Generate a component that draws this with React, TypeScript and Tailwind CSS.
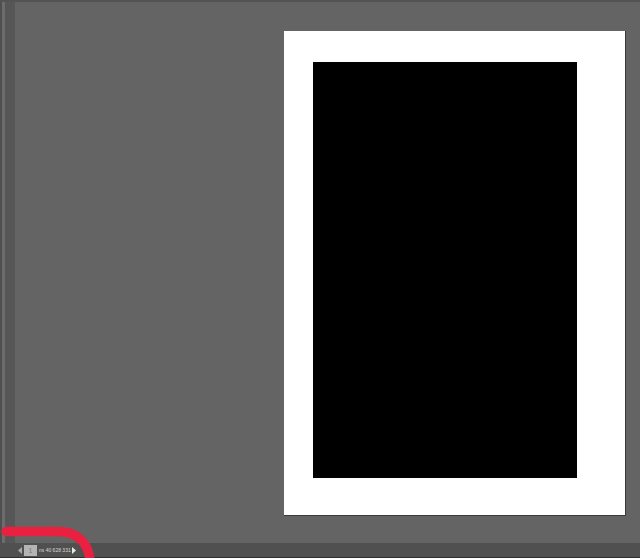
function Triangle({ dir }: { dir: "left" | "right" }) {
  return (
    <svg width="4" height="7" viewBox="0 0 4 7" className="shrink-0">
      <path d={dir === "left" ? "M4 0v7L0 3.500z" : "M0 0v7l4-3.500z"} fill={dir === "left" ? "#a8a8a8" : "#e8e8e8"} />
    </svg>
  );
}

export default function App() {
  return (
    <div className="relative flex h-[558px] w-[640px] flex-col overflow-hidden bg-[#646464] font-['Liberation_Sans',sans-serif]">
      <div className="h-[2px] shrink-0 bg-[#535353]" />
      <div className="flex min-h-0 flex-1">
        {/* left rulers */}
        <div className="flex w-[15px] shrink-0">
          <div className="w-[2px] bg-[#4f4f4f]" />
          <div className="w-[3px] bg-[#6c6c6c]" />
          <div className="flex-1 bg-[#565656]" />
        </div>
        {/* pasteboard */}
        <div className="flex-1 pl-[269px] pt-[29px]">
          <div className="h-[485px] w-[342px] border-r border-b border-[#3a3a3a] bg-white pl-[29px] pt-[31px]">
            <div className="h-[416px] w-[264px] bg-black" />
          </div>
        </div>
      </div>
      {/* status bar */}
      <div className="flex h-[15px] shrink-0 flex-col bg-[#505050]">
        <div className="flex flex-1 items-center pl-[18px]">
          <Triangle dir="left" />
          <div className="ml-[2px] flex h-[11px] w-[13px] items-center justify-center bg-[#b4b4b4] text-[7px] leading-none text-[#777]">
            1
          </div>
          <span className="ml-[2px] w-[30px] text-[5px] leading-none whitespace-nowrap text-[#d8d8d8]">ns 40 628 331</span>
          <div className="ml-[3px]">
            <Triangle dir="right" />
          </div>
        </div>
        <div className="h-[1px] bg-[#2e2e2e]" />
      </div>
      {/* red marker stroke drawn over the screenshot */}
      <svg width="110" height="48" viewBox="0 0 110 48" className="absolute bottom-0 left-0" fill="none">
        <path d="M6 21.500H58C76 21.500 90 32 90 54" stroke="#ea2040" strokeWidth="9.500" strokeLinecap="round" />
      </svg>
    </div>
  );
}
